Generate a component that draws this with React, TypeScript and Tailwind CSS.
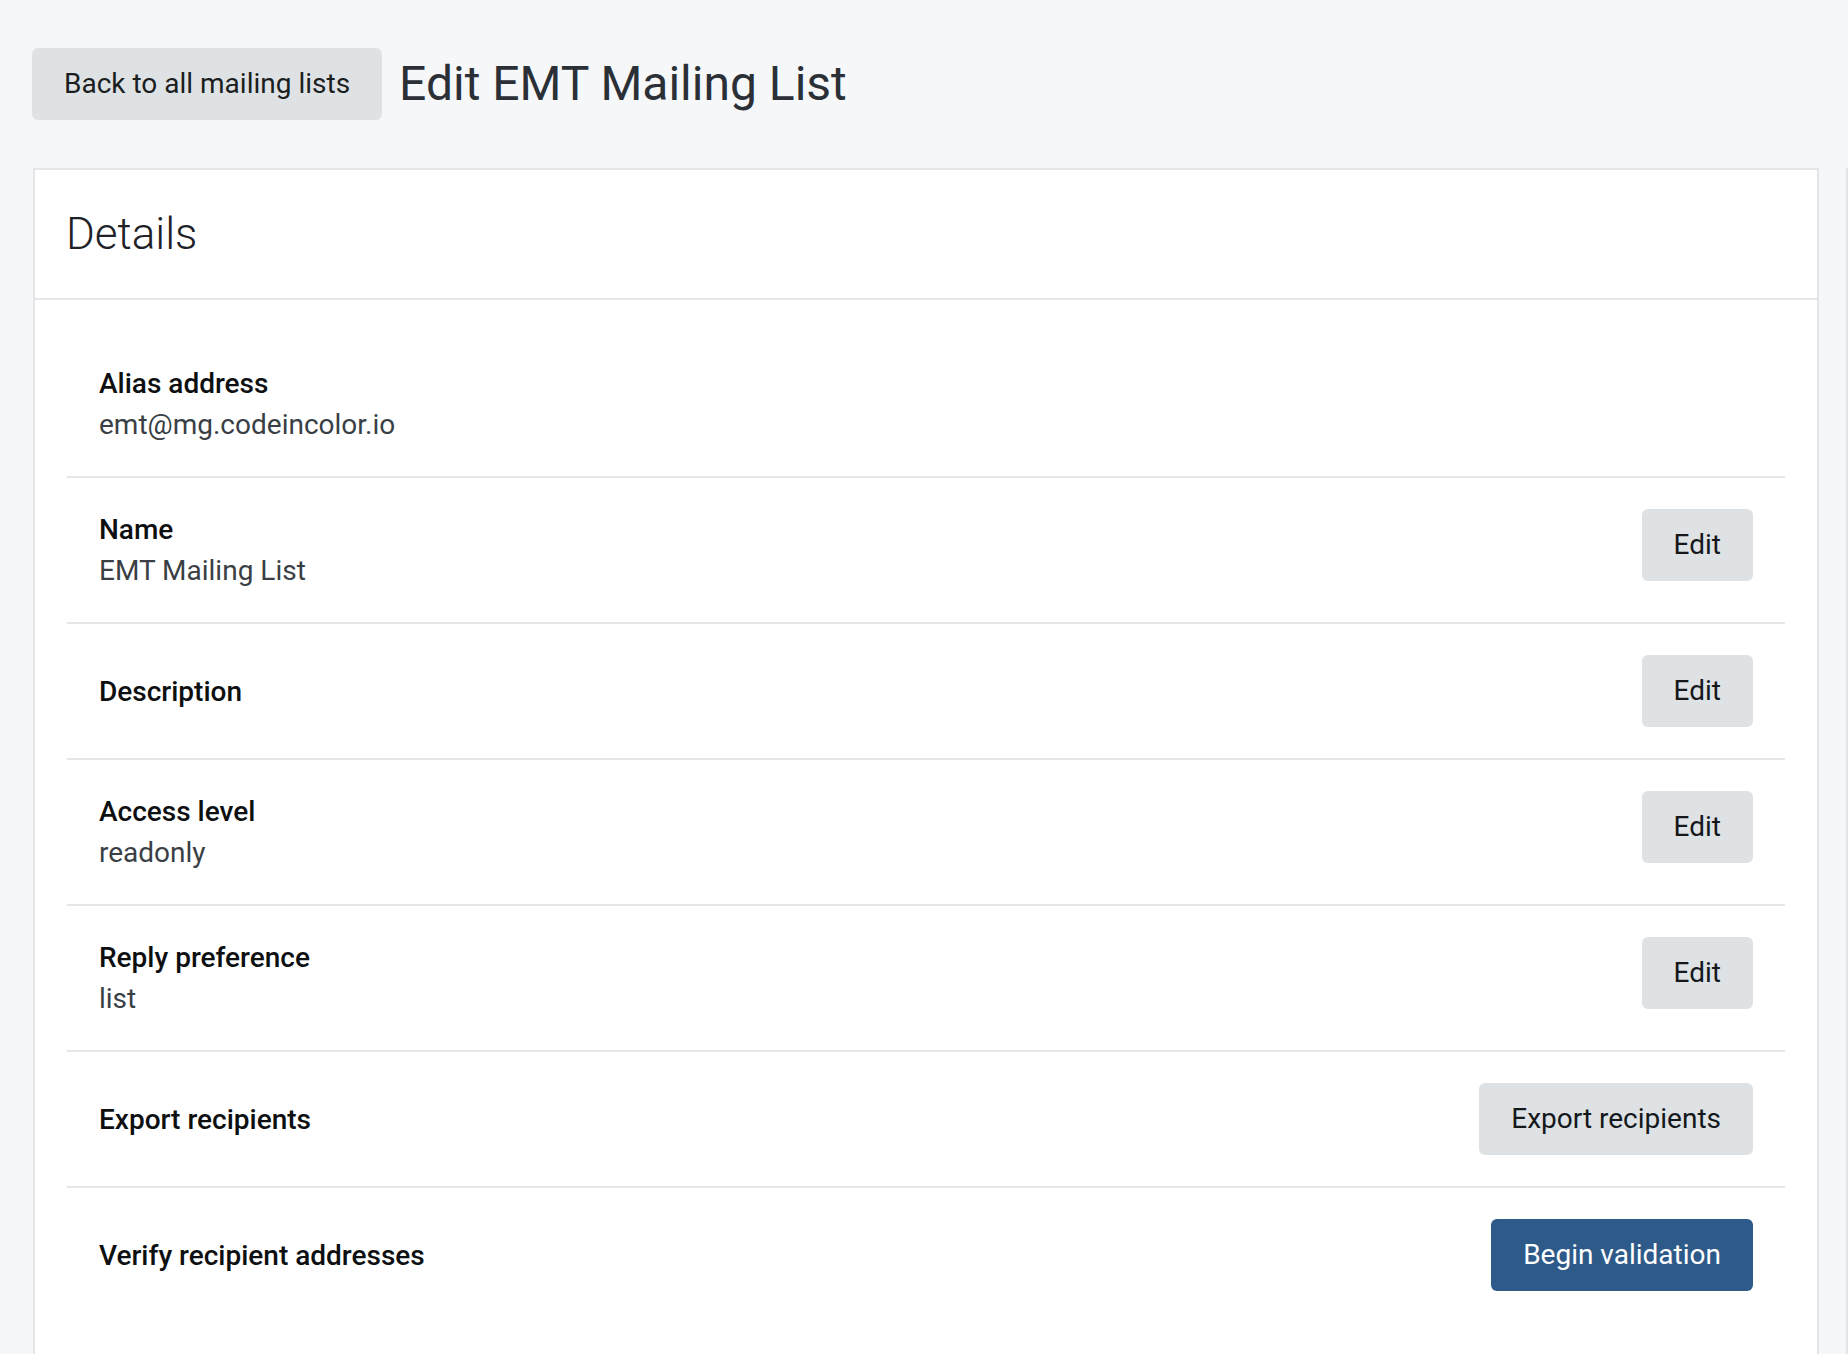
import React from "react";

const rows = [
  { label: "Alias address", value: "emt@mg.codeincolor.io" },
  { label: "Name", value: "EMT Mailing List", action: "Edit" },
  { label: "Description", action: "Edit" },
  { label: "Access level", value: "readonly", action: "Edit" },
  { label: "Reply preference", value: "list", action: "Edit" },
  { label: "Export recipients", action: "Export recipients" },
  { label: "Verify recipient addresses", action: "Begin validation", primary: true },
];

function Button({ children, primary }: { children: React.ReactNode; primary?: boolean }) {
  return (
    <button
      className={
        primary
          ? "self-start h-[72px] px-[32px] rounded-[6px] bg-[#2e5a8a] text-white text-[28px] leading-none"
          : "self-start h-[72px] px-[32px] rounded-[6px] bg-[#dee2e5] text-[#15181b] text-[28px] leading-none"
      }
    >
      {children}
    </button>
  );
}

export default function App() {
  return (
    <div className="min-h-screen bg-[#f6f7f9] font-['Roboto',sans-serif] overflow-hidden">
      {/* Header */}
      <div className="flex items-center gap-[17px] pl-[32px] pt-[48px]">
        <button className="h-[72px] px-[32px] rounded-[6px] bg-[#dee2e5] text-[#1b1e21] text-[28px] leading-none">
          Back to all mailing lists
        </button>
        <h1 className="text-[48px] text-[#2b3036] leading-none">Edit EMT Mailing List</h1>
      </div>

      <div className="flex gap-[27px] mt-[48px] pl-[33px]">
        {/* Details card */}
        <div className="w-[1786px] shrink-0 bg-white border-2 border-[#e3e5e8]">
          <div className="h-[130px] flex items-center px-[31px] border-b-2 border-[#e3e5e8]">
            <h2 className="text-[44px] font-light text-[#1e2227] leading-none">Details</h2>
          </div>
          <div className="px-[32px] pt-[32px]">
            {rows.map((r, i) => (
              <div
                key={r.label}
                className={
                  "flex items-center justify-between px-[32px] py-[31px] " +
                  (i < rows.length - 1 ? "border-b-2 border-[#e4e5e9]" : "")
                }
              >
                <div className="text-[28px] leading-[41px]">
                  <div className="font-medium text-[#0d0f11]">{r.label}</div>
                  {r.value && <div className="text-[#3a3f45]">{r.value}</div>}
                </div>
                {r.action && <Button primary={r.primary}>{r.action}</Button>}
              </div>
            ))}
          </div>
        </div>
        <div className="w-[400px] shrink-0 h-[1200px] bg-[#f6f7f9] border-l-2 border-[#e3e5e8]" />
      </div>
    </div>
  );
}
